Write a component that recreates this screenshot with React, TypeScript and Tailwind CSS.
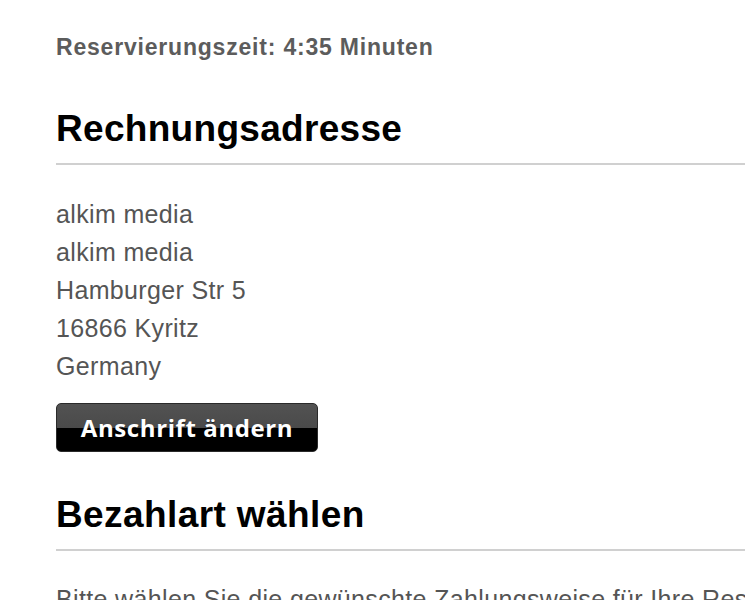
import React from "react";

export default function App() {
  const lines = ["alkim media", "alkim media", "Hamburger Str 5", "16866 Kyritz", "Germany"];
  return (
    <div className="w-[745px] h-[600px] overflow-hidden bg-white pl-[56px] pt-[34px]" style={{ fontFamily: '"Liberation Sans", Arial, sans-serif' }}>
      <div className="text-[23px] leading-[26px] font-bold tracking-[0.8px] text-[#5c5c5c]">Reservierungszeit: 4:35 Minuten</div>

      <h2 className="mt-[49px] pb-[14px] border-b-2 border-[#d0d0d0] text-[37px] leading-[40px] font-bold tracking-[0.3px] text-black">Rechnungsadresse</h2>

      <div className="mt-[30px] text-[25px] leading-[38px] tracking-[0.35px] text-[#555555]">
        {lines.map((l, i) => (
          <div key={i}>{l}</div>
        ))}
      </div>

      <button
        className="mt-[18px] block w-[262px] h-[49px] rounded-[5px] border border-[#2a2a2a] bg-[linear-gradient(to_bottom,#525252_0%,#4a4a4a_52%,#000000_52%,#000000_100%)] text-white text-[24px] font-bold tracking-[0.6px] leading-none [text-shadow:0_1px_1px_rgba(0,0,0,0.6)]"
        style={{ fontFamily: '"Open Sans", "Noto Sans", sans-serif' }}
      >
        Anschrift ändern
      </button>

      <h2 className="mt-[43px] pb-[14px] border-b-2 border-[#d0d0d0] text-[37px] leading-[40px] font-bold tracking-[0.4px] text-black">Bezahlart wählen</h2>

      <p className="mt-[29px] text-[25px] leading-[38px] tracking-[0.35px] text-[#555555] whitespace-nowrap">
        Bitte wählen Sie die gewünschte Zahlungsweise für Ihre Reservierung.
      </p>
    </div>
  );
}
